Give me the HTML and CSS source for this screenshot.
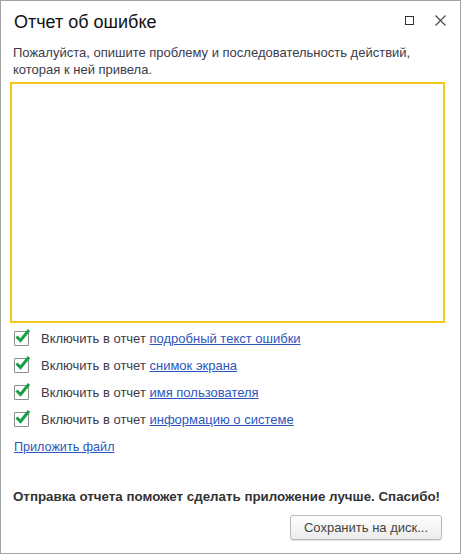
FILE: index.html
```html
<!DOCTYPE html>
<html>
<head>
<meta charset="UTF-8">
<title>Отчет об ошибке</title>
<link rel="stylesheet" href="styles.css">
</head>
<body>
	<div class="window">
		<div class="titlebar">
			<span class="title">Отчет об ошибке</span>
			<span class="tbtn">
				<svg width="9" height="9" viewBox="0 0 9 9"><rect x="0.5" y="0.5" width="8" height="8" fill="none" stroke="#333" stroke-width="1"/></svg>
			</span>
			<span class="tbtn close">
				<svg width="11" height="11" viewBox="0 0 11 11"><path d="M0.5 0.5 L10.5 10.5 M10.5 0.5 L0.5 10.5" stroke="#444" stroke-width="1.1" fill="none"/></svg>
			</span>
		</div>

		<div class="content">
			<p class="descr">Пожалуйста, опишите проблему и последовательность действий, которая к ней привела.</p>
			<textarea class="memo"></textarea>

			<ul class="opts">
				<li>
					<span class="chk"><svg width="18" height="18" viewBox="0 0 18 18"><path d="M2.5 9.5 L6.5 13.5 L15 3" stroke="#16a047" stroke-width="3" fill="none"/></svg></span>
					<span class="lbl">Включить в отчет <a href="#">подробный текст ошибки</a></span>
				</li>
				<li>
					<span class="chk"><svg width="18" height="18" viewBox="0 0 18 18"><path d="M2.5 9.5 L6.5 13.5 L15 3" stroke="#16a047" stroke-width="3" fill="none"/></svg></span>
					<span class="lbl">Включить в отчет <a href="#">снимок экрана</a></span>
				</li>
				<li>
					<span class="chk"><svg width="18" height="18" viewBox="0 0 18 18"><path d="M2.5 9.5 L6.5 13.5 L15 3" stroke="#16a047" stroke-width="3" fill="none"/></svg></span>
					<span class="lbl">Включить в отчет <a href="#">имя пользователя</a></span>
				</li>
				<li>
					<span class="chk"><svg width="18" height="18" viewBox="0 0 18 18"><path d="M2.5 9.5 L6.5 13.5 L15 3" stroke="#16a047" stroke-width="3" fill="none"/></svg></span>
					<span class="lbl">Включить в отчет <a href="#">информацию о системе</a></span>
				</li>
				<li class="attach"><a href="#">Приложить файл</a></li>
			</ul>

			<div class="footer">
				<p class="thanks">Отправка отчета поможет сделать приложение лучше. Спасибо!</p>
				<div class="btnrow">
					<button class="btn">Сохранить на диск...</button>
				</div>
			</div>
		</div>
	</div>
</body>
</html>
```

FILE: styles.css
```css
body {
	margin: 0;
	padding: 0;
	font-family: "Liberation Sans", Arial, sans-serif;
	background: #fff;
}

.window {
	width: 461px;
	height: 554px;
	box-sizing: border-box;
	border: 1px solid #a3a3a3;
	display: flex;
	flex-direction: column;
	background: #fff;
}

.titlebar {
	display: flex;
	align-items: center;
	height: 24px;
	padding: 9px 14px 0 13px;
}

.title {
	flex: 1;
	font-size: 18px;
	line-height: 24px;
	color: #111;
}

.tbtn {
	display: flex;
	align-items: center;
	margin-top: -3px;
}

.tbtn.close {
	margin-left: 21px;
}

.content {
	flex: 1;
	display: flex;
	flex-direction: column;
	padding: 10px 18px 13px 12px;
}

.descr {
	margin: 0;
	font-size: 13px;
	line-height: 17px;
	color: #3d3a4a;
}

.memo {
	display: block;
	margin: 4px -3px 0 -3px;
	height: 241px;
	box-sizing: border-box;
	border: 2px solid #f5c518;
	outline: none;
	resize: none;
	padding: 4px;
	font-family: inherit;
}

ul.opts {
	list-style-type: none;
	padding: 0;
	margin: 2px 0 0 0;
}

ul.opts > li {
	display: flex;
	align-items: center;
	height: 27px;
	font-size: 13px;
	color: #3d3a4a;
}

ul.opts > li.attach {
	padding-left: 1px;
	font-size: 12.6px;
}

.chk {
	flex-shrink: 0;
	position: relative;
	width: 13px;
	height: 13px;
	margin: 0 12px 0 1px;
	border: 1px solid #8c8c8c;
	border-radius: 1px;
	background: #fff;
}

.chk svg {
	position: absolute;
	left: -1px;
	top: -5px;
}

a {
	color: #2c56bd;
	text-decoration: underline;
}

.footer {
	margin-top: auto;
}

.thanks {
	margin: 0;
	font-size: 13.33px;
	line-height: 17px;
	font-weight: bold;
	color: #333;
}

.btnrow {
	display: flex;
	justify-content: flex-end;
	margin-top: 10px;
}

.btn {
	width: 152px;
	height: 25px;
	border: 1px solid #b9b9b9;
	border-radius: 3px;
	background: linear-gradient(#ffffff, #ebebeb);
	box-shadow: 0 1px 1px rgba(0, 0, 0, 0.12);
	font-family: inherit;
	font-size: 13px;
	color: #444;
	padding: 0;
}
```
